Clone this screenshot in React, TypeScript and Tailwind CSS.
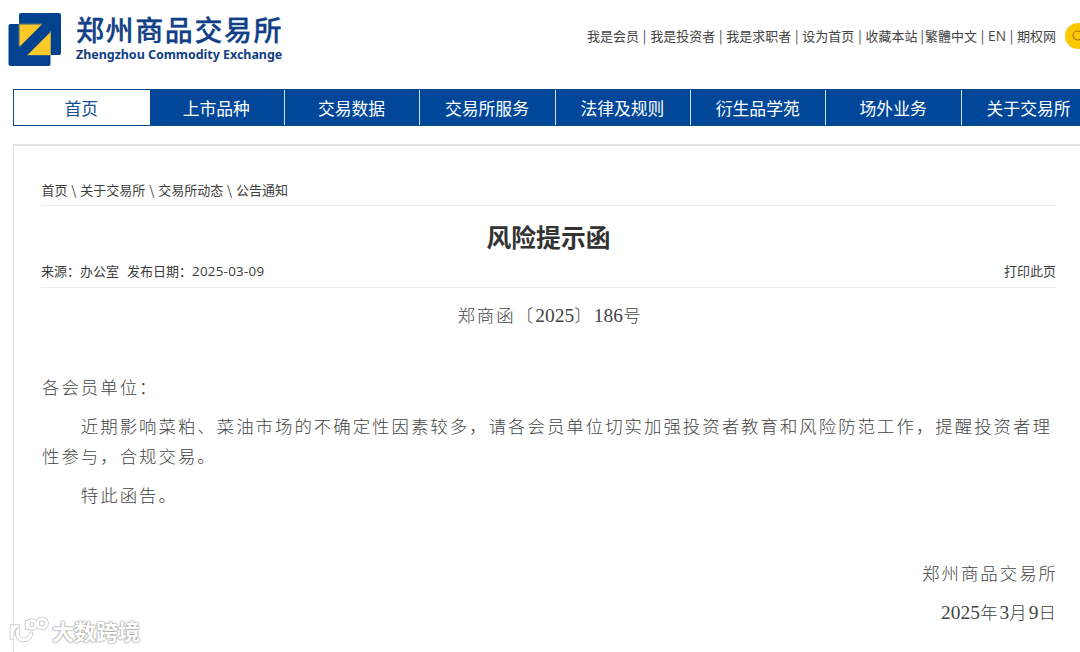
import React from 'react';
import clsx from 'clsx';

const topLinks = [
  { label: '我是会员', sep: ' | ' },
  { label: '我是投资者', sep: ' | ' },
  { label: '我是求职者', sep: ' | ' },
  { label: '设为首页', sep: ' | ' },
  { label: '收藏本站', sep: ' |' },
  { label: '繁體中文', sep: ' | ' },
  { label: 'EN', sep: ' | ' },
  { label: '期权网', sep: '' },
];

const navItems = ['首页', '上市品种', '交易数据', '交易所服务', '法律及规则', '衍生品学苑', '场外业务', '关于交易所'];

const Num: React.FC<{ children: React.ReactNode }> = ({ children }) => (
  <span className="font-['Liberation_Serif',serif] text-[19.4px] font-normal tracking-[0.1px]">{children}</span>
);

const Logo: React.FC = () => (
  <div className="flex pt-[13px] pl-2">
    <svg className="h-[53px] w-[54px] shrink-0" viewBox="0 0 54 53">
      <rect x="11" y="0" width="42" height="42" rx="2" fill="#02428f" />
      <rect x="0.500" y="11" width="42" height="42" rx="2" fill="#02428f" />
      <path d="M11 33V11H34M42.500 18V42H19" fill="none" stroke="#7d8a72" strokeWidth="0.800" />
      <path d="M11.500 11.500H34L11.500 34Z" fill="#fbc929" />
      <path d="M42.500 19V42H19.500Z" fill="#fbc929" />
      <path d="M34 11.500H42.500L11.500 42V34Z" fill="#02428f" />
    </svg>
    <div className="ml-3.5 text-[#123f86]">
      <div className="h-[34px] font-['Noto_Sans_CJK_SC',sans-serif] text-[28px] leading-[33px] font-medium tracking-[1.6px] whitespace-nowrap [-webkit-text-stroke:0.3px_#123f86]">
        郑州商品交易所
      </div>
      <div className="h-4 font-['Noto_Sans','Open_Sans',sans-serif] text-[12.5px] leading-4 font-bold tracking-[-0.04px] whitespace-nowrap">
        Zhengzhou Commodity Exchange
      </div>
    </div>
  </div>
);

const markPath = 'M4 11V23M4.500 17C5 13 7 11 10 11M10 15C8 20 11 25 16 25C20 25 22 22 23 19M19 7V13';

const Watermark: React.FC = () => (
  <div className="absolute top-[615px] left-[8px] flex items-center">
    <svg className="h-[30px] w-[42px]" viewBox="0 0 42 30" fill="none" strokeLinecap="round">
      <g stroke="#c4c4c4" strokeWidth="4.600">
        <path d={markPath} />
        <circle cx="24" cy="9.500" r="4" />
        <circle cx="34" cy="8.500" r="4.500" />
      </g>
      <g stroke="#fff" strokeWidth="3">
        <path d={markPath} />
        <circle cx="24" cy="9.500" r="4" />
        <circle cx="34" cy="8.500" r="4.500" />
      </g>
    </svg>
    <span className="ml-0.5 text-[22px] leading-[30px] font-bold whitespace-nowrap text-white [text-shadow:0_0_2px_#999,0_0_2px_#aaa,0_0_1px_#aaa]">
      大数跨境
    </span>
  </div>
);

const App: React.FC = () => {
  return (
    <div className="relative h-[652px] w-[1080px] overflow-hidden bg-white font-['Noto_Sans_CJK_SC',sans-serif] text-[#333]">
      <header className="flex h-[89px] justify-between">
        <Logo />
        <div className="flex h-[26px] pt-[23px]">
          <div className="mr-[9px] flex text-[13px] leading-[25px] whitespace-pre text-[#444]">
            {topLinks.map((link) => (
              <React.Fragment key={link.label}>
                <a className={link.label === 'EN' ? "font-['Open_Sans',sans-serif] text-[13.6px]" : ''}>{link.label}</a>
                {link.sep && (
                  <span className={clsx('text-center', link.sep === ' |' ? 'w-[7.500px] pl-0.5' : 'w-[11.100px]')}>
                    {link.sep.trim()}
                  </span>
                )}
              </React.Fragment>
            ))}
          </div>
          <div className="flex h-[26px] w-[15px] items-center overflow-hidden rounded-l-full bg-[#fac800] pl-[7px]">
            <svg className="h-3.5 w-3.5 shrink-0" viewBox="0 0 14 14" fill="none" stroke="#a9780c" strokeWidth="1.200">
              <circle cx="5.500" cy="6.500" r="4.500" />
              <path d="M9 10L12 13" />
            </svg>
          </div>
        </div>
      </header>

      <nav className="ml-[13px] flex h-[37px] overflow-hidden border-y border-l border-[#0b4a84] bg-[#004799]">
        {navItems.map((item, i) => (
          <a
            key={item}
            className={clsx(
              'h-full shrink-0 pr-px text-center text-[16.8px] leading-[36px]',
              i === 0 ? 'w-[135.5px] bg-white text-[#15508f]' : 'w-[135.4px] border-r border-[#d5e4f2] text-white'
            )}
          >
            {item}
          </a>
        ))}
      </nav>

      <main className="mt-[18px] ml-[13px] h-[508px] border-t-2 border-l border-[#e2e2e2] pr-6 pl-[27px]">
        <div className="flex h-[60px] items-end border-b border-[#ebebeb] pl-[0.500px] text-[13px] leading-[31px] whitespace-pre text-[#3c3c3c]">
          {['首页', '关于交易所', '交易所动态', '公告通知'].map((crumb, i) => (
            <React.Fragment key={crumb}>
              {i > 0 && <span className="w-[12.8px] text-center">\</span>}
              <a>{crumb}</a>
            </React.Fragment>
          ))}
        </div>

        <h1 className="h-[50px] pt-3 text-center text-[24.8px] leading-[37px] font-bold">风险提示函</h1>

        <div className="flex h-8 justify-between border-b border-[#ebebeb] text-[13px] leading-[29px] text-[#3c3c3c]">
          <div className="flex">
            <span>来源：办公室</span>
            <span className="ml-2">发布日期：</span>
            <span className="pt-px font-['Open_Sans',sans-serif] text-[13.4px] tracking-[0.24px]">2025-03-09</span>
          </div>
          <a>打印此页</a>
        </div>

        {/* notice body */}
        <article className="-mr-0.5 pl-px text-[17.4px] leading-[30px] font-light tracking-[2.03px] whitespace-nowrap text-[#444]">
          <p className="mt-3 text-center">
            郑商函〔<Num>2025</Num>〕<Num>186</Num>号
          </p>
          <p className="mt-[41px]">各会员单位：</p>
          <p className="mt-[9px] indent-[38.8px]">
            近期影响菜粕、菜油市场的不确定性因素较多，请各会员单位切实加强投资者教育和风险防范工作，提醒投资者理
            <br />
            性参与，合规交易。
          </p>
          <p className="mt-[9px] indent-[38.8px]">特此函告。</p>
          <p className="mt-[48px] text-right">郑州商品交易所</p>
          <p className="mt-[9px] text-right">
            <Num>2025</Num>年<Num>3</Num>月<Num>9</Num>日
          </p>
        </article>
      </main>
      <Watermark />
    </div>
  );
};

export default App;
